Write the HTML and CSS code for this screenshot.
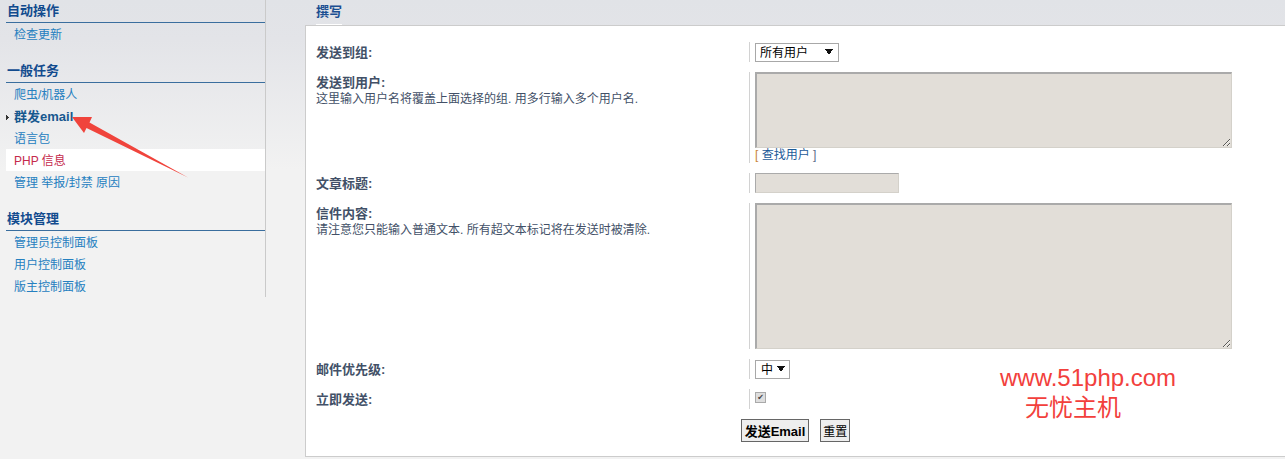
FILE: index.html
```html
<!DOCTYPE html>
<html>
<head>
    <meta charset="utf-8">
    <title>群发email</title>
    <link rel="stylesheet" href="styles.css">
</head>
<body>
    <div class="page">
        <div class="menu">
            <div class="menu-block">
                <h3>自动操作</h3>
                <ul>
                    <li><a href="#">检查更新</a></li>
                </ul>
            </div>
            <div class="menu-block">
                <h3>一般任务</h3>
                <ul>
                    <li><a href="#">爬虫/机器人</a></li>
                    <li class="current"><a href="#"><svg class="marker" width="3" height="5" viewBox="0 0 3 5"><path d="M0 0h1v1h1v1h1v1h-1v1h-1v1h-1z" fill="#333"/></svg>群发email</a></li>
                    <li><a href="#">语言包</a></li>
                    <li class="hilite"><a href="#">PHP 信息</a></li>
                    <li><a href="#">管理 举报/封禁 原因</a></li>
                </ul>
            </div>
            <div class="menu-block">
                <h3>模块管理</h3>
                <ul>
                    <li><a href="#">管理员控制面板</a></li>
                    <li><a href="#">用户控制面板</a></li>
                    <li><a href="#">版主控制面板</a></li>
                </ul>
            </div>
        </div>

        <div class="main">
            <div class="tabs"><span class="tab">撰写</span></div>
            <form class="panel" onsubmit="return false;">
                <dl class="row">
                    <dt><label for="group">发送到组:</label></dt>
                    <dd><select id="group" class="select wide"><option>所有用户</option></select></dd>
                </dl>
                <dl class="row">
                    <dt><label for="usernames">发送到用户:</label><span class="hint">这里输入用户名将覆盖上面选择的组. 用多行输入多个用户名.</span></dt>
                    <dd>
                        <textarea id="usernames" class="area small"></textarea>
                        <div class="find"><span class="br">[</span> <a href="#">查找用户</a> <span class="br2">]</span></div>
                    </dd>
                </dl>
                <dl class="row">
                    <dt><label for="subject">文章标题:</label></dt>
                    <dd><input type="text" id="subject" class="text"></dd>
                </dl>
                <dl class="row">
                    <dt><label for="message">信件内容:</label><span class="hint">请注意您只能输入普通文本. 所有超文本标记将在发送时被清除.</span></dt>
                    <dd><textarea id="message" class="area big"></textarea></dd>
                </dl>
                <dl class="row">
                    <dt><label for="priority">邮件优先级:</label></dt>
                    <dd><select id="priority" class="select narrow"><option>中</option></select></dd>
                </dl>
                <dl class="row">
                    <dt><label for="queue">立即发送:</label></dt>
                    <dd><input type="checkbox" id="queue" class="check" checked></dd>
                </dl>
                <div class="buttons">
                    <button type="submit" class="btn btn-main">发送Email</button>
                    <button type="reset" class="btn">重置</button>
                </div>
            </form>
        </div>
    </div>

    <!-- red annotation arrow -->
    <svg class="arrow" width="200" height="190" viewBox="0 0 200 190">
        <polygon points="72,117 92,117 89.5,122.5 188,177.5 86.5,128 84,133" fill="#f0443c"/>
    </svg>

    <div class="watermark">
        <div>www.51php.com</div>
        <div class="wm-cn">无忧主机</div>
    </div>
</body>
</html>
```

FILE: styles.css
```css
body {
    margin: 0;
    font-family: "Liberation Sans", "Noto Sans CJK SC", sans-serif;
    font-size: 12px;
    background: #f2f2f2 linear-gradient(#e1e3e7 0, #e3e4e8 40px, #f2f2f2 170px) no-repeat;
    min-height: 459px;
}

a {
    text-decoration: none;
}

.page {
    display: flex;
    align-items: flex-start;
}

/* left menu */
.menu {
    box-sizing: border-box;
    width: 266px;
    padding-top: 1px;
    padding-left: 6px;
    border-right: 1px solid #cacaca;
}

.menu-block {
    margin-bottom: 16px;
}

.menu-block:last-child {
    margin-bottom: 0;
}

.menu h3 {
    margin: 0;
    padding: 2px 0 3px 1px;
    font-size: 13px;
    line-height: 16px;
    font-weight: bold;
    color: #124b8e;
    border-bottom: 1px solid #3a6e9e;
}

.menu ul {
    list-style: none;
    margin: 0;
    padding: 0;
}

.menu li {
    height: 22px;
}

.menu li a {
    display: block;
    padding: 3px 0 1px 8px;
    line-height: 18px;
    color: #2580c0;
}

.menu li.current a {
    font-weight: bold;
    color: #17588f;
    font-size: 13px;
}

.marker {
    margin-left: -8px;
    margin-right: 5px;
    vertical-align: 1px;
}

.menu li.hilite {
    background-color: #fff;
}

.menu li.hilite a {
    color: #c52a4c;
}

/* main area */
.main {
    flex: 1;
    margin-left: 39px;
}

.tabs {
    height: 25px;
    padding-left: 11px;
}

.tab {
    display: inline-block;
    line-height: 24px;
    border-bottom: 1px solid #fff;
    font-size: 13px;
    font-weight: bold;
    color: #1b4f92;
}

.panel {
    background-color: #fff;
    border: 1px solid #ccc;
    border-right: none;
    padding: 16px 10px 14px;
}

.row {
    display: grid;
    grid-template-columns: 433px 1fr;
    margin: 0 0 10px;
}

.row dt {
    padding-top: 3px;
    line-height: 16px;
    color: #425067;
}

.row dt label {
    display: block;
    font-weight: bold;
    font-size: 13px;
}

.hint {
    display: block;
    font-size: 12px;
}

.row dd {
    margin: 0;
    min-height: 20px;
    padding-left: 5px;
    border-left: 1px solid #d2d2d2;
}

.select {
    appearance: none;
    box-sizing: border-box;
    height: 19px;
    margin: 0;
    padding: 0 0 0 4px;
    border: 1px solid #a8a8a8;
    border-radius: 0;
    color: #000;
    font-family: "Liberation Sans", "Noto Sans CJK SC", sans-serif;
    font-size: 12px;
    background-color: #fff;
    background-image: linear-gradient(to top right, transparent 50%, #111 50%), linear-gradient(to top left, transparent 50%, #111 50%);
    background-size: 4px 6px, 4px 6px;
    background-repeat: no-repeat;
    background-position: right 9px top 5px, right 5px top 5px;
    display: block;
    margin-top: 1px;
}

.select.wide {
    width: 84px;
}

.select.narrow {
    width: 35px;
    padding-left: 5px;
    background-position: right 8px top 5px, right 4px top 5px;
}

.area,
.text {
    display: block;
    box-sizing: border-box;
    margin: 0;
    background-color: #e2ded8;
    border: 1px solid;
    border-color: #aaa #d4d1ca #d4d1ca #aaa;
    font-family: "Liberation Sans", "Noto Sans CJK SC", sans-serif;
    font-size: 12px;
}

.area {
    width: 477px;
    border-width: 2px 1px 1px 2px;
}

.area.small {
    height: 76px;
}

.area.big {
    height: 146px;
}

.text {
    width: 144px;
    height: 20px;
}

.find {
    line-height: 15px;
    font-size: 12px;
}

.find a {
    color: #1b5a98;
}

.br {
    color: #c8833c;
}

.br2 {
    color: #5a6e8a;
}

.check {
    appearance: none;
    display: block;
    box-sizing: border-box;
    width: 11px;
    height: 11px;
    margin: 3px 0 0;
    border: 1px solid #a9a9a9;
    background-color: #dedede;
}

.check:checked::after {
    content: "✔";
    display: block;
    font-family: "DejaVu Sans", sans-serif;
    font-size: 8px;
    line-height: 9px;
    text-align: center;
    color: #444;
}

.buttons {
    display: flex;
    justify-content: center;
    gap: 11px;
    margin-top: 1px;
}

.btn {
    height: 23px;
    padding: 0 2px;
    border: 1px solid #666;
    border-radius: 0;
    background-color: #eeeeee;
    color: #000;
    font-family: "Liberation Sans", "Noto Sans CJK SC", sans-serif;
    font-size: 12px;
}

.btn-main {
    font-weight: bold;
    font-size: 13px;
    padding: 0 3px;
}

/* overlays */
.arrow {
    position: absolute;
    top: 0;
    left: 0;
    pointer-events: none;
}

.watermark {
    position: absolute;
    left: 1000px;
    top: 363px;
    font-family: "Liberation Sans", "Noto Sans CJK SC", sans-serif;
    font-size: 24px;
    line-height: 30px;
    color: #f2403c;
}

.wm-cn {
    padding-left: 25px;
}
```
